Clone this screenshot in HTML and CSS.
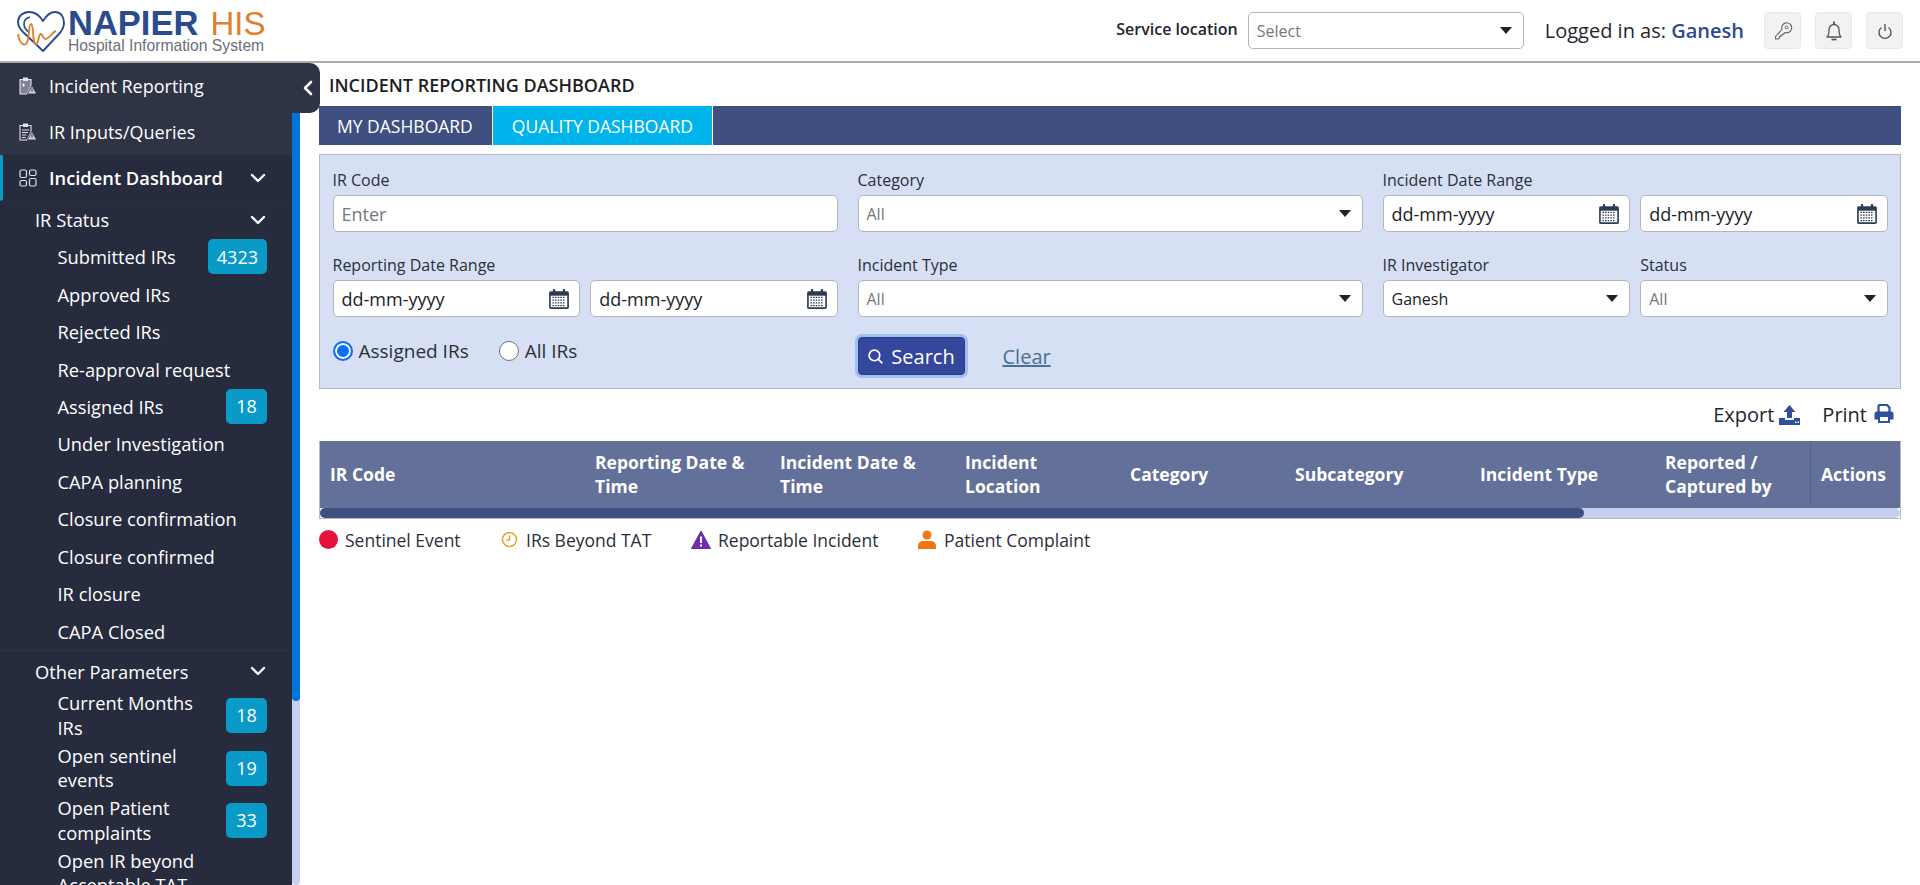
FILE: index.html
```html
<!DOCTYPE html>
<html lang="en">
<head>
  <meta charset="UTF-8">
  <title>Incident Reporting Dashboard</title>
  <link rel="stylesheet" href="styles.css">
</head>
<body>
  <svg class="defs" width="0" height="0">
    <symbol id="cal" viewBox="0 0 20 20">
      <rect x="1" y="3" width="18" height="16" rx="1.5" fill="#2f3a56"/>
      <rect x="2.5" y="7" width="15" height="10.5" fill="#fff"/>
      <rect x="4.5" y="1" width="2" height="4" fill="#2f3a56"/>
      <rect x="13.5" y="1" width="2" height="4" fill="#2f3a56"/>
      <path d="M4 8.5h12M4 11h12M4 13.500h12M4 16h12" stroke="#2f3a56" stroke-width="1.200" stroke-dasharray="1.400 1"/>
    </symbol>
    <symbol id="clip-fill" viewBox="0 0 18 18">
      <path d="M1 2.500h11v6.500l-4 8h-7z" fill="#7f8393" stroke="#e2e4ea" stroke-width="1.100"/>
      <rect x="4" y=".5" width="5" height="3.500" fill="#e2e4ea"/>
      <path d="M3 8h3M4.500 6.500v3" stroke="#fff" stroke-width="1"/>
      <path d="M13 8.500l4.700 8.500h-9.400z" fill="#c9ccd5" stroke="#2e3345" stroke-width=".8"/>
      <path d="M13 11.500v3" stroke="#2e3345" stroke-width="1"/>
    </symbol>
    <symbol id="clip-lines" viewBox="0 0 18 18">
      <path d="M1 2.500h11v6.500l-4 8h-7z" fill="none" stroke="#e2e4ea" stroke-width="1.100"/>
      <rect x="4" y=".5" width="5" height="3.500" fill="#e2e4ea"/>
      <path d="M3 7h7M3 9.500h6M3 12h4.500M3 14.500h3.500" stroke="#e2e4ea" stroke-width="1.100"/>
      <path d="M13 8.500l4.700 8.500h-9.400z" fill="#c9ccd5" stroke="#2e3345" stroke-width=".8"/>
      <path d="M13 11.500v3" stroke="#2e3345" stroke-width="1"/>
    </symbol>
    <symbol id="chev" viewBox="0 0 16 10">
      <path d="M2 2l6 6 6-6" fill="none" stroke="#fff" stroke-width="2.400" stroke-linecap="round" stroke-linejoin="round"/>
    </symbol>
  </svg>

  <header class="topbar">
    <div class="logo">
      <svg class="logo-heart" viewBox="0 0 48 42">
        <path d="M26 41L6 22C2 18 1 15 1 12 1 6 6 2 12 2c6 0 11 4 14 9 3-5 7-9 12-9 6 0 9 5 9 11 0 5-3 9-6 12z" fill="none" stroke="#2b4c8c" stroke-width="1.900" stroke-linejoin="round"/>
        <path d="M13 7C9 8 7 11 7 14c0 4 2 6 5 8" fill="none" stroke="#2b4c8c" stroke-width="1.700"/>
        <path d="M1 24C2 32 6 36 9 34 13 31 11 14 14 14 17 14 15 34 19 34 22 34 21 24 24 24 26 24 26 30 29 29 33 28 35 22 39 21" fill="none" stroke="#e0802c" stroke-width="1.900"/>
      </svg>
      <div class="logo-text">
        <div class="logo-name"><b>NAPIER</b> <span>HIS</span></div>
        <div class="logo-sub">Hospital Information System</div>
      </div>
    </div>
    <div class="top-right">
      <span class="loc-label">Service location</span>
      <div class="field select loc-select"><span class="muted loc-text">Select</span><i class="caret"></i></div>
      <span class="logged">Logged in as: <b>Ganesh</b></span>
      <button class="top-btn">
        <svg viewBox="0 0 20 20" width="20" height="20"><path d="M9 8.500a5 5 0 1 1 3 3L9.500 14H8v1.500H6.500V17L5 18H2.500v-2.500z" fill="none" stroke="#666" stroke-width="1.100" stroke-linejoin="round"/><circle cx="13.500" cy="6.500" r="1.400" fill="none" stroke="#666"/></svg>
      </button>
      <button class="top-btn">
        <svg viewBox="0 0 22 22" width="22" height="22"><path d="M4 17c1.500-1.500 2-3 2-7.500a5 5 0 0 1 10 0c0 4.500.5 6 2 7.500z" fill="none" stroke="#555" stroke-width="1.300" stroke-linejoin="round"/><path d="M11 1.500v3" stroke="#555" stroke-width="1.800"/><path d="M8.500 19.500h5" stroke="#555" stroke-width="1.700"/></svg>
      </button>
      <button class="top-btn">
        <svg viewBox="0 0 20 20" width="20" height="20"><path d="M6.500 6.500a6 6 0 1 0 7 0" fill="none" stroke="#555" stroke-width="1.400"/><path d="M10 3v7" stroke="#555" stroke-width="1.400"/></svg>
      </button>
    </div>
  </header>

  <div class="layout">
    <aside class="sidebar">
      <nav class="nav">
        <a class="nav-top"><svg class="nav-ico"><use href="#clip-fill"/></svg>Incident Reporting</a>
        <a class="nav-top"><svg class="nav-ico"><use href="#clip-lines"/></svg>IR Inputs/Queries</a>
        <a class="nav-top active">
          <svg class="nav-ico" viewBox="0 0 18 18"><g fill="none" stroke="#dfe1e7" stroke-width="1.200"><rect x="1" y="1" width="6.500" height="7.500" rx="1.500"/><rect x="10.500" y="1" width="6.500" height="5.500" rx="1.500"/><rect x="1" y="11.500" width="6.500" height="5.500" rx="1.500"/><rect x="10.500" y="9.500" width="6.500" height="7.500" rx="1.500"/></g></svg>
          Incident Dashboard<svg class="chev"><use href="#chev"/></svg>
        </a>
        <div class="nav-head">IR Status<svg class="chev"><use href="#chev"/></svg></div>
        <a class="nav-sub">Submitted IRs<span class="badge">4323</span></a>
        <a class="nav-sub">Approved IRs</a>
        <a class="nav-sub">Rejected IRs</a>
        <a class="nav-sub">Re-approval request</a>
        <a class="nav-sub">Assigned IRs<span class="badge">18</span></a>
        <a class="nav-sub">Under Investigation</a>
        <a class="nav-sub">CAPA planning</a>
        <a class="nav-sub">Closure confirmation</a>
        <a class="nav-sub">Closure confirmed</a>
        <a class="nav-sub">IR closure</a>
        <a class="nav-sub">CAPA Closed</a>
        <div class="nav-head split">Other Parameters<svg class="chev"><use href="#chev"/></svg></div>
        <a class="nav-sub tall"><span class="wrap">Current Months IRs</span><span class="badge">18</span></a>
        <a class="nav-sub tall"><span class="wrap">Open sentinel events</span><span class="badge">19</span></a>
        <a class="nav-sub tall"><span class="wrap">Open Patient complaints</span><span class="badge">33</span></a>
        <a class="nav-sub tall"><span class="wrap">Open IR beyond Acceptable TAT</span></a>
      </nav>
      <div class="track"><div class="thumb"></div></div>
      <div class="collapse">
        <svg width="12" height="18" viewBox="0 0 12 18"><path d="M9 3L3 9l6 6" fill="none" stroke="#fff" stroke-width="2.600" stroke-linecap="round" stroke-linejoin="round"/></svg>
      </div>
    </aside>

    <main class="main">
      <h1 class="page-title">INCIDENT REPORTING DASHBOARD</h1>
      <div class="tabs">
        <a class="tab">MY DASHBOARD</a>
        <a class="tab current">QUALITY DASHBOARD</a>
      </div>

      <section class="filters">
        <div class="f-col">
          <label>IR Code</label>
          <div class="field"><span class="muted">Enter</span></div>
        </div>
        <div class="f-col">
          <label>Category</label>
          <div class="field select"><span class="muted small">All</span><i class="caret"></i></div>
        </div>
        <div class="f-col">
          <label>Incident Date Range</label>
          <div class="pair">
            <div class="field select">dd-mm-yyyy<svg class="cal"><use href="#cal"/></svg></div>
            <div class="field select">dd-mm-yyyy<svg class="cal"><use href="#cal"/></svg></div>
          </div>
        </div>
        <div class="f-col">
          <label>Reporting Date Range</label>
          <div class="pair">
            <div class="field select">dd-mm-yyyy<svg class="cal"><use href="#cal"/></svg></div>
            <div class="field select">dd-mm-yyyy<svg class="cal"><use href="#cal"/></svg></div>
          </div>
        </div>
        <div class="f-col">
          <label>Incident Type</label>
          <div class="field select"><span class="muted small">All</span><i class="caret"></i></div>
        </div>
        <div class="pair">
          <div class="f-col">
            <label>IR Investigator</label>
            <div class="field select"><span class="picked">Ganesh</span><i class="caret"></i></div>
          </div>
          <div class="f-col">
            <label>Status</label>
            <div class="field select"><span class="muted small">All</span><i class="caret"></i></div>
          </div>
        </div>
        <div class="radios">
          <span class="radio on"></span><span class="radio-text">Assigned IRs</span>
          <span class="radio"></span><span class="radio-text">All IRs</span>
        </div>
        <div class="actions">
          <button class="btn-search">
            <svg width="17" height="17" viewBox="0 0 16 16"><circle cx="7" cy="7" r="5" fill="none" stroke="#fff" stroke-width="1.600"/><path d="M11 11l3.500 3.500" stroke="#fff" stroke-width="1.600"/></svg>
            Search
          </button>
          <a class="clear">Clear</a>
        </div>
      </section>

      <div class="tools">
        <a>Export
          <svg width="21" height="21" viewBox="0 0 21 21"><path d="M10.500 1l6 7h-3.500v6h-5v-6h-3.500z" fill="#2f4f9c"/><path d="M0 14h6v2h9v-2h6v7h-21z" fill="#2f4f9c"/><rect x="16" y="17.500" width="1.500" height="1.500" fill="#fff"/><rect x="18.500" y="17.500" width="1.500" height="1.500" fill="#fff"/></svg>
        </a>
        <a>Print
          <svg width="20" height="20" viewBox="0 0 20 20"><path d="M4.500 8V2.500a1.500 1.500 0 0 1 1.500-1.500h7l2.500 2.500V8" fill="none" stroke="#2f4f9c" stroke-width="2.200"/><path d="M3 7.500h14a2.500 2.500 0 0 1 2.500 2.500v5.500H16v3.500H4v-3.500H.5V10A2.500 2.500 0 0 1 3 7.500z" fill="#2f4f9c"/><rect x="6" y="13" width="8" height="4" fill="#fff"/></svg>
        </a>
      </div>

      <div class="table">
        <div class="thead">
          <div>IR Code</div>
          <div>Reporting Date &amp; Time</div>
          <div>Incident Date &amp; Time</div>
          <div>Incident Location</div>
          <div>Category</div>
          <div>Subcategory</div>
          <div>Incident Type</div>
          <div>Reported / Captured by</div>
          <div class="th-actions">Actions</div>
        </div>
        <div class="hscroll"><div class="hthumb"></div></div>
      </div>

      <div class="legend">
        <span class="lg-item lg-1"><i class="dot"></i>Sentinel Event</span>
        <span class="lg-item lg-2">
          <svg width="17" height="17" viewBox="0 0 17 17"><circle cx="8.500" cy="8.500" r="7" fill="none" stroke="#e5a32a" stroke-width="1.500"/><path d="M8.500 4.500v4.500h-3" fill="none" stroke="#e5a32a" stroke-width="1.400"/></svg>
          IRs Beyond TAT</span>
        <span class="lg-item lg-3">
          <svg width="20" height="19" viewBox="0 0 20 19"><path d="M10 1l9.500 17.500H.5z" fill="#6f2da8" stroke="#6f2da8" stroke-linejoin="round"/><path d="M10 6.500v6.500M10 14.500v2" stroke="#fff" stroke-width="2"/></svg>
          Reportable Incident</span>
        <span class="lg-item lg-4">
          <svg width="18" height="19" viewBox="0 0 18 19"><circle cx="9" cy="5" r="4.500" fill="#ee7711"/><path d="M0 19v-3a5 5 0 0 1 5-5h8a5 5 0 0 1 5 5v3z" fill="#ee7711"/></svg>
          Patient Complaint</span>
      </div>
    </main>
  </div>
</body>
</html>
```

FILE: styles.css
```css
*{
  padding: 0;
  margin: 0;
  box-sizing: border-box;
}
html,body{
  height: 100%;
  overflow: hidden;
}
body{
  font-family: "Open Sans", "Noto Sans", sans-serif;
  font-size: 18px;
  color: #24262e;
  background: #fff;
}
.defs{
  position: absolute;
}

/* header */
.topbar{
  height: 63px;
  display: flex;
  align-items: center;
  justify-content: space-between;
  border-bottom: 2px solid #a9abae;
  padding: 0 17px;
}
.logo{
  display: flex;
  align-items: center;
  gap: 3px;
}
.logo-heart{
  width: 48px;
  height: 42px;
}
.logo-text{
  font-family: "Liberation Sans", sans-serif;
}
.logo-name{
  font-size: 33px;
  line-height: 28px;
  white-space: nowrap;
}
.logo-name b{
  color: #2b4c8c;
  font-size: 34.500px;
}
.logo-name span{
  color: #e0802c;
  margin-left: 3px;
}
.logo-sub{
  font-size: 15.700px;
  line-height: 15px;
  color: #6c6f75;
  white-space: nowrap;
}
.top-right{
  display: flex;
  align-items: center;
}
.loc-label{
  font-size: 16px;
  font-weight: 600;
  margin-right: 10px;
  margin-bottom: 3px;
}
.loc-select{
  width: 276px;
  border-color: #a9abae;
}
.loc-text{
  font-size: 16px;
}
.logged{
  font-size: 20px;
  margin-left: 21px;
  margin-right: 20px;
}
.logged b{
  font-weight: 600;
  color: #2f4a8c;
}
.top-btn{
  width: 37px;
  height: 37px;
  background: #f2f2f2;
  border: 1px solid #e9e9e9;
  border-radius: 4px;
  display: flex;
  align-items: center;
  justify-content: center;
  margin-right: 14px;
}
.top-btn:last-child{
  margin-right: 0;
}

/* sidebar */
.layout{
  display: flex;
  height: calc(100vh - 63px);
}
.sidebar{
  position: relative;
  width: 300px;
  flex: none;
  display: flex;
  height: 100%;
}
.nav{
  width: 292px;
  background: #262b3d;
  color: #fff;
  font-size: 18.300px;
  overflow: hidden;
}
.nav-top{
  height: 46px;
  display: flex;
  align-items: center;
  background: #2e3345;
  padding-left: 19px;
  font-size: 18px;
  border-bottom: 1px solid #292e40;
}
.nav-top.active{
  background: #262b3d;
  font-weight: 600;
  font-size: 18.300px;
  border-left: 3px solid #0a9ac7;
  padding-left: 16px;
  padding-right: 26px;
}
.nav-ico{
  width: 18px;
  height: 18px;
  margin-right: 12px;
  flex: none;
}
.chev{
  width: 16px;
  height: 10px;
  margin-left: auto;
  flex: none;
}
.nav-head{
  height: 37px;
  display: flex;
  align-items: center;
  padding: 0 26px 0 35px;
}
.nav-head.split{
  border-top: 1px solid #2e3345;
  height: 39.500px;
  padding-top: 2px;
}
.nav-sub{
  height: 37.450px;
  display: flex;
  align-items: center;
  justify-content: space-between;
  padding: 0 25px 0 57.500px;
}
.nav-sub.tall{
  height: 52.500px;
  line-height: 24.500px;
}
.wrap{
  width: 150px;
}
.badge{
  height: 35px;
  min-width: 41px;
  padding: 0 9px;
  background: #0a9ac7;
  border-radius: 5px;
  font-size: 18px;
  display: flex;
  align-items: center;
  justify-content: center;
}
.track{
  width: 8px;
  background: #c5cfee;
  border-radius: 0 0 4px 4px;
}
.thumb{
  height: 638px;
  background: #0073dc;
  border-radius: 0 0 4px 4px;
}
.collapse{
  position: absolute;
  top: 0;
  right: -20px;
  width: 48px;
  height: 50px;
  padding-left: 24px;
  background: #2e3345;
  border-radius: 0 10px 10px 0;
  display: flex;
  align-items: center;
  justify-content: center;
}

/* main */
.main{
  flex: 1;
  padding: 0 19px;
}
.page-title{
  height: 43px;
  padding: 1px 0 0 10px;
  display: flex;
  align-items: center;
  font-size: 18px;
  font-weight: 600;
  color: #1c1d22;
}
.tabs{
  height: 39px;
  background: #3e4f80;
  display: flex;
}
.tab{
  display: flex;
  align-items: center;
  padding: 0 19px;
  color: #fff;
  font-size: 17.500px;
  border-right: 1px solid #fff;
}
.tab:first-child{
  padding: 0 19px 0 18px;
}
.tab.current{
  background: #00b5eb;
}

.filters{
  margin-top: 9px;
  height: 235px;
  background: #d6dff3;
  border: 1px solid #b8bbc2;
  padding: 14px 12px 0 12.500px;
  display: grid;
  grid-template-columns: repeat(3, 1fr);
  grid-template-rows: 63px 63px 38px;
  column-gap: 19.500px;
  row-gap: 22px;
}
.f-col label{
  display: block;
  height: 26px;
  line-height: 22px;
  font-size: 16px;
  font-weight: 500;
  color: #2b2f3a;
}
.pair{
  display: grid;
  grid-template-columns: 1fr 1fr;
  column-gap: 10px;
}
.field{
  height: 37px;
  background: #fff;
  border: 1px solid #b3b5ba;
  border-radius: 5px;
  padding: 0 8px;
  display: flex;
  align-items: center;
  font-size: 18px;
  color: #20222a;
}
.select{
  justify-content: space-between;
}
.muted{
  color: #737780;
}
.small{
  font-size: 16px;
}
.picked{
  font-size: 16px;
}
.caret{
  width: 0;
  height: 0;
  border-left: 6px solid transparent;
  border-right: 6px solid transparent;
  border-top: 7px solid #20222a;
  margin-right: 3px;
}
.cal{
  width: 22px;
  height: 22px;
  margin-right: 1px;
}
.radios{
  display: flex;
  align-items: center;
  height: 28px;
  margin-top: -2px;
}
.radio{
  width: 20px;
  height: 20px;
  border-radius: 50%;
  background: #fff;
  border: 1px solid #6d7077;
  flex: none;
}
.radio.on{
  border: 2px solid #0b6efd;
  box-shadow: inset 0 0 0 2px #fff;
  background: #0b6efd;
}
.radio-text{
  font-size: 19px;
  margin: 0 30px 0 6px;
  color: #2b2f3a;
}
.actions{
  display: flex;
  align-items: center;
  align-self: start;
  gap: 38px;
  margin-top: -2px;
}
.btn-search{
  width: 107px;
  height: 38px;
  display: flex;
  align-items: center;
  justify-content: center;
  gap: 7px;
  font: inherit;
  font-size: 20px;
  color: #fff;
  background: #35479c;
  border: 1px solid #2b3c8c;
  border-radius: 4px;
  box-shadow: 0 0 0 3px #9fc0f2;
}
.clear{
  color: #4a7296;
  font-size: 20px;
  text-decoration: underline;
}

.tools{
  height: 52px;
  display: flex;
  justify-content: flex-end;
  align-items: center;
  gap: 22px;
  padding: 0 7px 2px 0;
}
.tools a{
  display: flex;
  align-items: center;
  gap: 5px;
  font-size: 20px;
}
.tools a:last-child{
  gap: 7px;
}

.table{
  border: 1px solid #b8bbc2;
  border-top: 0;
}
.thead{
  height: 67px;
  padding-bottom: 1px;
  background: #62709a;
  color: #fff;
  font-size: 17.500px;
  font-weight: 700;
  line-height: 24px;
  display: grid;
  grid-template-columns: 265px 185px 185px 165px 165px 185px 185px 155px 1fr;
  align-items: center;
}
.thead div{
  padding: 0 24px 0 10px;
}
.thead .th-actions{
  height: 100%;
  display: flex;
  align-items: center;
  padding: 0 0 0 10px;
  border-left: 1px solid #55628c;
}
.hscroll{
  height: 10px;
  background: #c5cfee;
  border-radius: 5px;
}
.hthumb{
  width: 1264px;
  height: 100%;
  background: #3e4f80;
  border-radius: 5px;
}

.legend{
  display: flex;
  align-items: center;
  height: 41px;
  font-size: 17.500px;
  color: #2b2f3a;
}
.lg-item{
  display: flex;
  align-items: center;
  gap: 7px;
}
.dot{
  width: 19px;
  height: 19px;
  border-radius: 50%;
  background: #e8113d;
}
.lg-1{
  width: 182px;
}
.lg-2{
  width: 190px;
  gap: 8px;
}
.lg-3{
  width: 227px;
}
.lg-4{
  gap: 8px;
}
```
